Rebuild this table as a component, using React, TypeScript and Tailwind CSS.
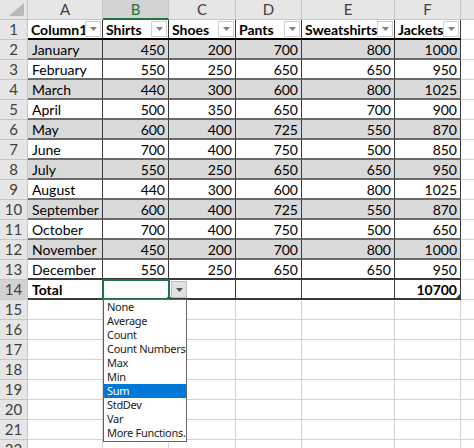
import React from "react";

const cols = [
  { l: "A", w: "w-[75px]" },
  { l: "B", w: "w-[66px]" },
  { l: "C", w: "w-[67px]" },
  { l: "D", w: "w-[66px]" },
  { l: "E", w: "w-[93px]" },
  { l: "F", w: "w-[66px]" },
];

const headers = ["Column1", "Shirts", "Shoes", "Pants", "Sweatshirts", "Jackets"];

const data: [string, number, number, number, number, number][] = [
  ["January", 450, 200, 700, 800, 1000],
  ["February", 550, 250, 650, 650, 950],
  ["March", 440, 300, 600, 800, 1025],
  ["April", 500, 350, 650, 700, 900],
  ["May", 600, 400, 725, 550, 870],
  ["June", 700, 400, 750, 500, 850],
  ["July", 550, 250, 650, 650, 950],
  ["August", 440, 300, 600, 800, 1025],
  ["September", 600, 400, 725, 550, 870],
  ["October", 700, 400, 750, 500, 650],
  ["November", 450, 200, 700, 800, 1000],
  ["December", 550, 250, 650, 650, 950],
];

const menu = ["None", "Average", "Count", "Count Numbers", "Max", "Min", "Sum", "StdDev", "Var", "More Functions..."];

function RowHead({ n, sel }: { n: number | string; sel?: boolean }) {
  return (
    <div
      className={`w-[28px] shrink-0 h-full flex items-center justify-center border-r border-b border-[#c6c6c6] text-[15px] text-[#3f3f3f] ${
        sel ? "bg-[#d2d2d2]" : "bg-[#e6e6e6]"
      }`}
    >
      {n}
    </div>
  );
}

function FilterBtn() {
  return (
    <div className="w-[16px] h-[16px] shrink-0 mr-[1px] bg-white border border-[#d0d0d0] flex items-center justify-center">
      <svg width="7" height="4" viewBox="0 0 7 4">
        <path d="M0 0 L7 0 L3.5 4 Z" fill="#808080" />
      </svg>
    </div>
  );
}

function GCell() {
  return <div className="flex-1 h-full bg-white border-b border-[#d4d4d4]" />;
}

export default function App() {
  return (
    <div
      className="relative w-[474px] h-[448px] overflow-hidden bg-white text-[14px] text-black leading-none"
      style={{ fontFamily: "Lato, 'Liberation Sans', sans-serif" }}
    >
      {/* Column header row */}
      <div className="flex h-[20px]">
        <div className="w-[28px] shrink-0 h-full bg-[#e6e6e6] border-r border-b border-[#c6c6c6] relative">
          <svg className="absolute right-[3px] bottom-[3px]" width="15" height="13" viewBox="0 0 15 13">
            <path d="M15 0 L15 13 L0 13 Z" fill="#b9b9b9" />
          </svg>
        </div>
        {cols.map((c) => (
          <div
            key={c.l}
            className={`${c.w} shrink-0 h-full flex items-center justify-center border-r border-[#c6c6c6] text-[15px] ${
              c.l === "B"
                ? "bg-[#d2d2d2] text-[#217346] border-b-2 border-b-[#217346]"
                : "bg-[#e6e6e6] text-[#3f3f3f] border-b"
            }`}
          >
            {c.l}
          </div>
        ))}
        <div className="flex-1 h-full bg-[#e6e6e6] border-b border-[#c6c6c6]" />
      </div>

      {/* Row 1 headers */}
      <div className="flex h-[20px]">
        <RowHead n={1} />
        {cols.map((c, i) => (
          <div
            key={c.l}
            className={`${c.w} shrink-0 h-full flex items-center bg-white border-r border-r-[#3a3a3a] border-b-2 border-b-black font-bold pl-[3px]`}
          >
            <span className="flex-1 min-w-0 whitespace-nowrap pt-[1px]">{headers[i]}</span>
            <FilterBtn />
          </div>
        ))}
        <GCell />
      </div>

      {/* Data rows */}
      {data.map((r, ri) => (
        <div key={ri} className="flex h-[20px]">
          <RowHead n={ri + 2} />
          {r.map((v, ci) => (
            <div
              key={ci}
              className={`${cols[ci].w} shrink-0 h-full flex items-center pt-[1px] border-r border-r-[#3a3a3a] border-b-2 ${
                ri === 11 ? "border-b-[#3a3a3a]" : "border-b-[#6a6a6a]"
              } ${ri % 2 === 0 ? "bg-[#d9d9d9]" : "bg-white"} ${
                ci === 0 ? "pl-[4px]" : "justify-end pr-[3px]"
              }`}
            >
              {v}
            </div>
          ))}
          <GCell />
        </div>
      ))}

      {/* Total row */}
      <div className="flex h-[20px]">
        <RowHead n={14} sel />
        {cols.map((c, ci) => (
          <div
            key={c.l}
            className={`${c.w} shrink-0 h-full flex items-center pt-[1px] bg-white border-r border-r-[#3a3a3a] border-b-2 border-b-[#3a3a3a] font-bold relative ${
              ci === 0 ? "pl-[4px]" : "justify-end pr-[3px]"
            }`}
          >
            {ci === 0 ? "Total" : ci === 5 ? "10700" : ""}
            {ci === 5 && (
              <svg className="absolute right-0 bottom-0" width="4" height="4" viewBox="0 0 4 4">
                <path d="M4 0 L4 4 L0 4 Z" fill="#1f3c88" />
              </svg>
            )}
          </div>
        ))}
        <GCell />
      </div>

      {/* Empty rows */}
      {[15, 16, 17, 18, 19, 20, 21, 22].map((n) => (
        <div key={n} className="flex h-[20px]">
          <RowHead n={n} />
          {cols.map((c) => (
            <div key={c.l} className={`${c.w} shrink-0 h-full bg-white border-r border-b border-[#d4d4d4]`} />
          ))}
          <GCell />
        </div>
      ))}

      {/* Active cell border B14 */}
      <div className="absolute left-[102px] top-[279px] w-[68px] h-[21px] border-2 border-[#217346] pointer-events-none" />
      <div className="absolute left-[167px] top-[297px] w-[4px] h-[4px] bg-[#217346]" />

      {/* Dropdown button */}
      <div className="absolute left-[171px] top-[281px] w-[16px] h-[17px] bg-[#e1e1e1] border border-[#bdbdbd] flex items-center justify-center">
        <svg width="7" height="4" viewBox="0 0 7 4">
          <path d="M0 0 L7 0 L3.5 4 Z" fill="#505050" />
        </svg>
      </div>

      {/* Dropdown list */}
      <div
        className="absolute left-[103px] top-[299px] w-[84px] h-[143px] bg-white border border-[#646464] overflow-hidden text-[11px] tracking-[-0.3px] text-[#1a1a1a]"
        style={{ fontFamily: "'Noto Sans', 'Open Sans', sans-serif" }}
      >
        {menu.map((m) => (
          <div
            key={m}
            className={`h-[14px] leading-[14px] pl-[3px] whitespace-nowrap ${
              m === "Sum" ? "bg-[#0078d7] text-white" : ""
            }`}
          >
            {m}
          </div>
        ))}
      </div>
    </div>
  );
}
